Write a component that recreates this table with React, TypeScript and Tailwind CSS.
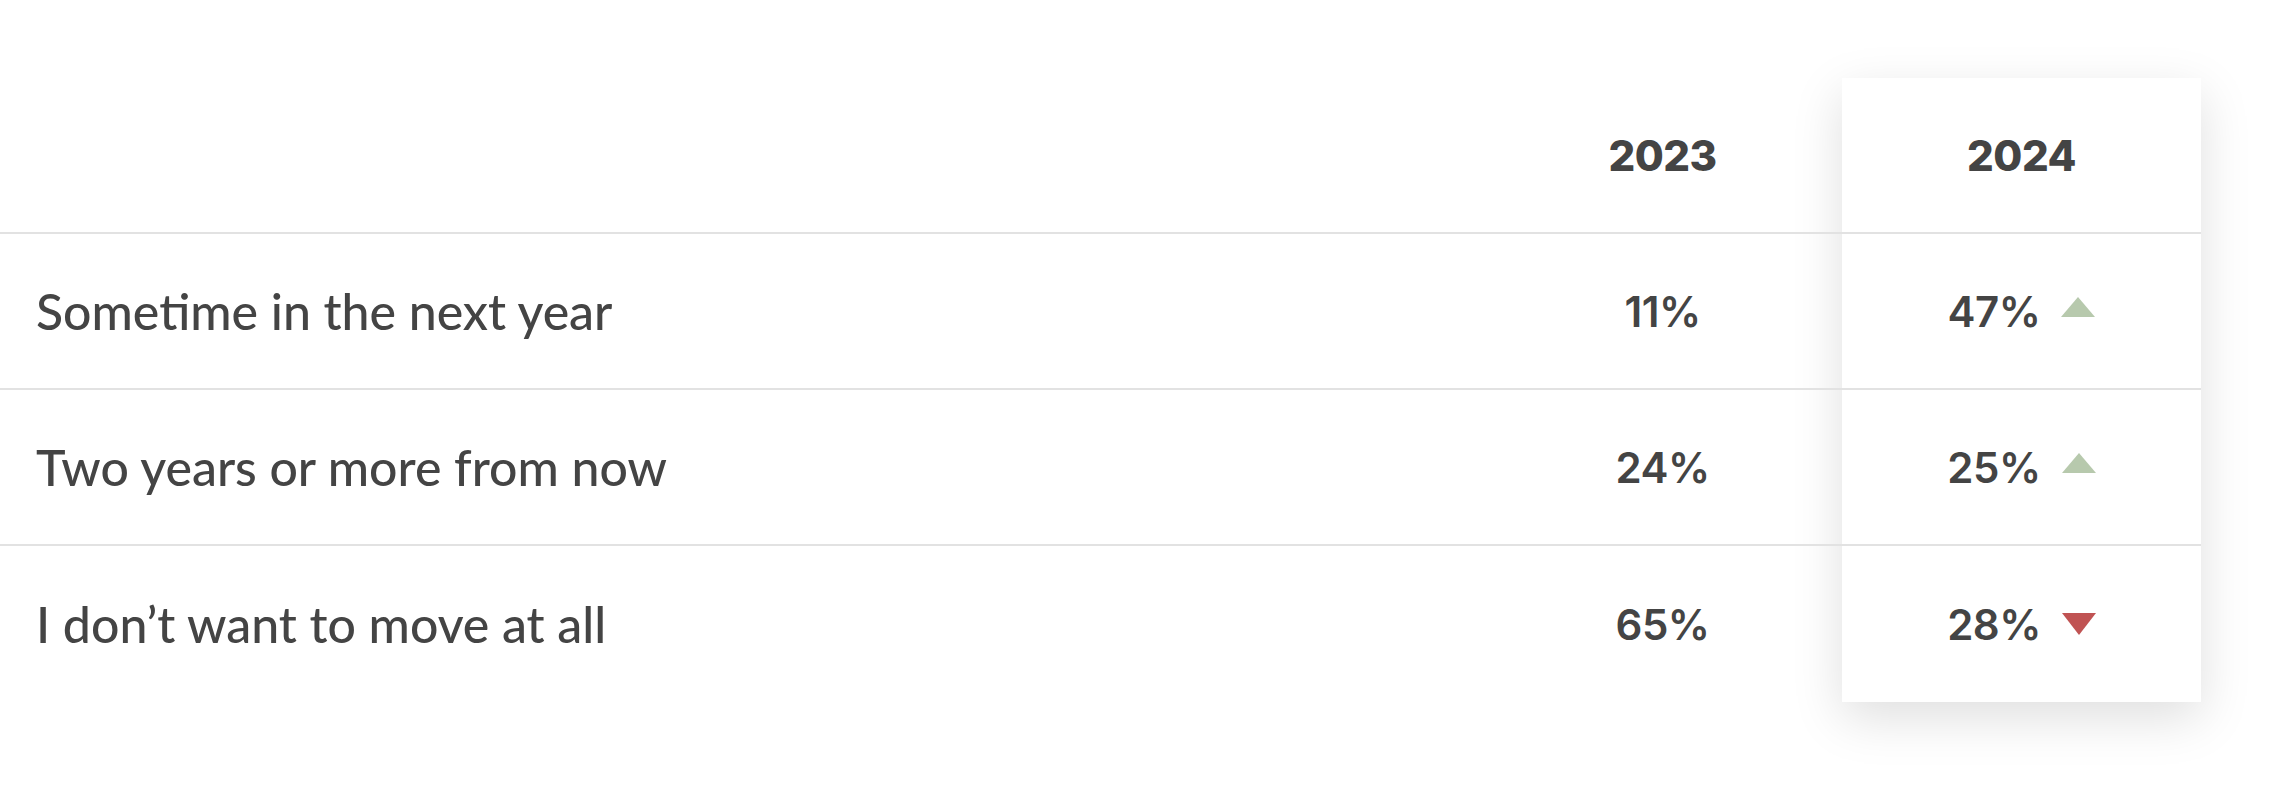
const rows = [
  { label: "Sometime in the next year", prev: "11%", cur: "47%", up: true },
  { label: "Two years or more from now", prev: "24%", cur: "25%", up: true },
  { label: "I don’t want to move at all", prev: "65%", cur: "28%", up: false },
];

const rowStart = ["row-start-2", "row-start-3", "row-start-4"];

function Arrow({ up }: { up: boolean }) {
  return up ? (
    <svg width="34" height="20" viewBox="0 0 34 20" className="-translate-y-[4px]">
      <polygon points="17,0 34,20 0,20" fill="#b7c9ad" />
    </svg>
  ) : (
    <svg width="34" height="22" viewBox="0 0 34 22">
      <polygon points="0,0 34,0 17,22" fill="#c05353" />
    </svg>
  );
}

export default function App() {
  return (
    <div className="w-[2280px] h-[788px] bg-white pt-[78px] text-[#444444] font-['Lato',sans-serif]">
      <div className="grid w-[2201px] grid-cols-[1483px_359px_359px] grid-rows-[156px_156px_156px_156px]">
        {/* highlighted 2024 column */}
        <div className="col-start-3 row-start-1 row-span-4 bg-white shadow-[0_16px_48px_rgba(0,0,0,0.13)]" />

        {/* header */}
        <div className="col-start-1 row-start-1 border-b-2 border-[#e2e2e2]" />
        <div className="col-start-2 row-start-1 border-b-2 border-[#e2e2e2] flex items-center justify-center font-['Inter',sans-serif] font-extrabold text-[42px] tracking-[-0.5px]">
          2023
        </div>
        <div className="col-start-3 row-start-1 border-b-2 border-[#e2e2e2] flex items-center justify-center font-['Inter',sans-serif] font-extrabold text-[42px] tracking-[-0.5px]">
          2024
        </div>

        {rows.map((r, i) => {
          const line = i < rows.length - 1 ? "border-b-2 border-[#e2e2e2]" : "";
          return (
            <div key={r.label} className="contents">
              <div className={`col-start-1 ${rowStart[i]} flex items-center pl-[36px] text-[50px] font-medium ${line}`}>
                {r.label}
              </div>
              <div className={`col-start-2 ${rowStart[i]} flex items-center justify-center font-['Inter',sans-serif] font-semibold text-[42px] tracking-[-0.5px] ${line}`}>
                {r.prev}
              </div>
              <div className={`col-start-3 ${rowStart[i]} flex items-center justify-center gap-[21px] font-['Inter',sans-serif] font-semibold text-[42px] tracking-[-0.5px] ${line}`}>
                <span>{r.cur}</span>
                <Arrow up={r.up} />
              </div>
            </div>
          );
        })}
      </div>
    </div>
  );
}
